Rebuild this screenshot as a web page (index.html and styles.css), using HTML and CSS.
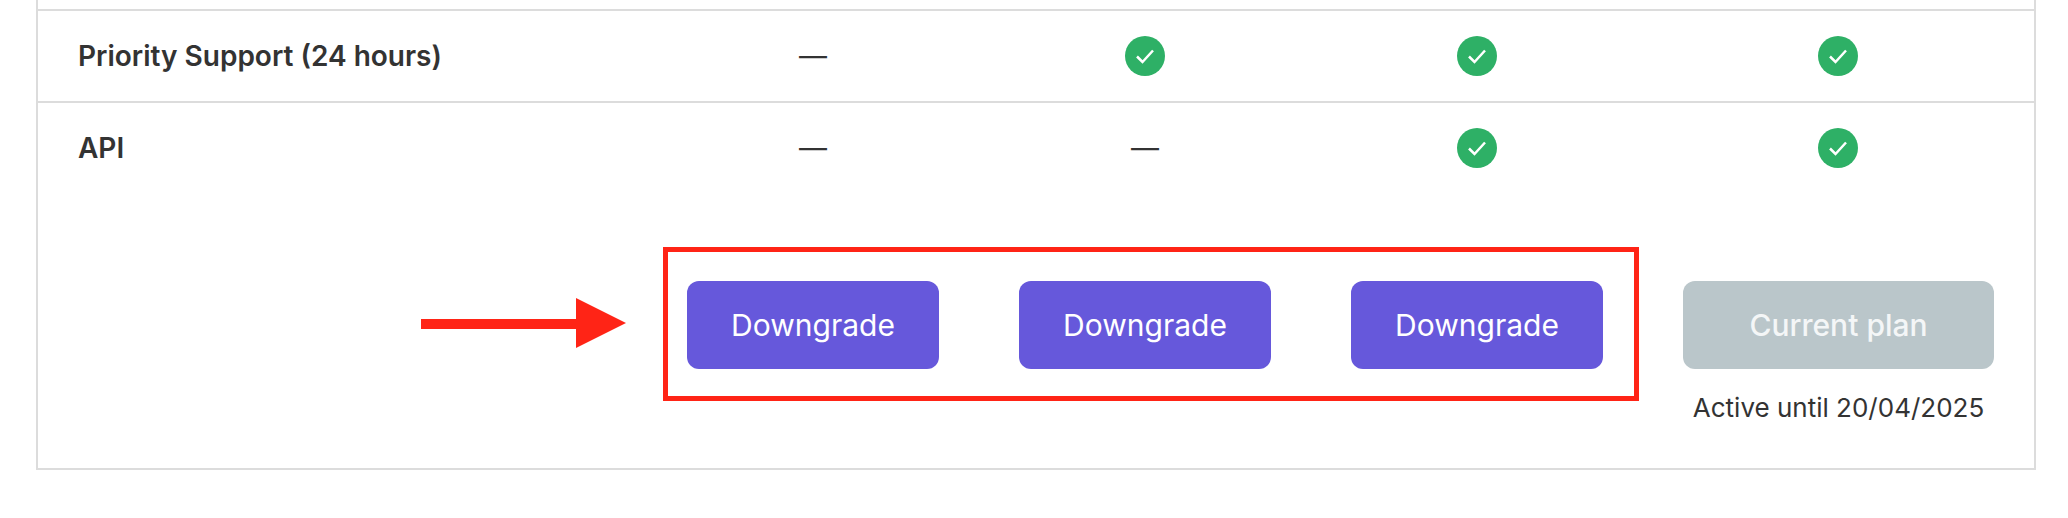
FILE: index.html
```html
<!DOCTYPE html>
<html lang="en">
<head>
<meta charset="utf-8">
<title>Plans</title>
<link rel="stylesheet" href="styles.css">
</head>
<body>
<main class="table">
  <div class="row row-stub"></div>
  <div class="row row-line">
    <div class="label">Priority Support (24 hours)</div>
    <div class="cell dash">—</div>
    <div class="cell"><svg class="check" viewBox="0 0 40 40"><circle cx="20" cy="20" r="20"/><path d="M12 20.5l5.5 5.5 10.5-11.5"/></svg></div>
    <div class="cell"><svg class="check" viewBox="0 0 40 40"><circle cx="20" cy="20" r="20"/><path d="M12 20.5l5.5 5.5 10.5-11.5"/></svg></div>
    <div class="cell"><svg class="check" viewBox="0 0 40 40"><circle cx="20" cy="20" r="20"/><path d="M12 20.5l5.5 5.5 10.5-11.5"/></svg></div>
  </div>
  <div class="row">
    <div class="label">API</div>
    <div class="cell dash">—</div>
    <div class="cell dash">—</div>
    <div class="cell"><svg class="check" viewBox="0 0 40 40"><circle cx="20" cy="20" r="20"/><path d="M12 20.5l5.5 5.5 10.5-11.5"/></svg></div>
    <div class="cell"><svg class="check" viewBox="0 0 40 40"><circle cx="20" cy="20" r="20"/><path d="M12 20.5l5.5 5.5 10.5-11.5"/></svg></div>
  </div>
  <div class="row row-actions">
    <div></div>
    <button class="btn">Downgrade</button>
    <button class="btn">Downgrade</button>
    <button class="btn">Downgrade</button>
    <div class="current">
      <button class="btn btn-disabled" disabled>Current plan</button>
      <p class="active">Active until 20/04/2025</p>
    </div>
  </div>
  <div class="highlight"></div>
  <svg class="arrow" viewBox="0 0 205 50"><path d="M0 21h155V0l50 25-50 25V31H0z"/></svg>
</main>
</body>
</html>
```
FILE: styles.css
```css
* { box-sizing: border-box; }
html, body { margin: 0; padding: 0; background: #fff; }
body { height: 518px; overflow: hidden; font-family: Inter, "Liberation Sans", sans-serif; color: #333; }
.table {
  position: relative;
  width: 2000px;
  height: 470px;
  margin-left: 36px;
  border: 2px solid #dcdcdc;
  border-top: 0;
}
.row {
  display: grid;
  grid-template-columns: 529px 252px 252px 252px 311px;
  column-gap: 80px;
  padding: 0 40px;
  height: 90px;
  align-items: center;
}
.row-stub { height: 11px; border-bottom: 2px solid #dcdcdc; }
.row-line { height: 92px; border-bottom: 2px solid #dcdcdc; }
.label { font-size: 28px; font-weight: 600; color: #333; }
.cell { display: flex; justify-content: center; align-items: center; }
.cell:last-child { padding-right: 1px; }
.dash { font-size: 28px; line-height: 40px; color: #333; }
.check { width: 40px; height: 40px; display: block; }
.check circle { fill: #2eb066; }
.check path { fill: none; stroke: #fff; stroke-width: 2.5; }
.row-actions { height: auto; margin-top: 88px; align-items: start; }
.btn {
  display: block;
  width: 100%;
  height: 88px;
  border: 0;
  border-radius: 12px;
  background: #6658db;
  color: #fff;
  font-family: inherit;
  font-size: 30px;
  font-weight: 400;
}
.btn-disabled { background: #bac6ca; color: #f4f6f7; font-weight: 500; }
.current { text-align: center; }
.active { margin: 21px 0 0; font-size: 26px; line-height: 36px; color: #333; }
.highlight {
  position: absolute;
  left: 625px;
  top: 247px;
  width: 976px;
  height: 154px;
  border: 5px solid #ff2416;
}
.arrow { position: absolute; left: 383px; top: 298px; width: 205px; height: 50px; }
.arrow path { fill: #ff2416; }
```
